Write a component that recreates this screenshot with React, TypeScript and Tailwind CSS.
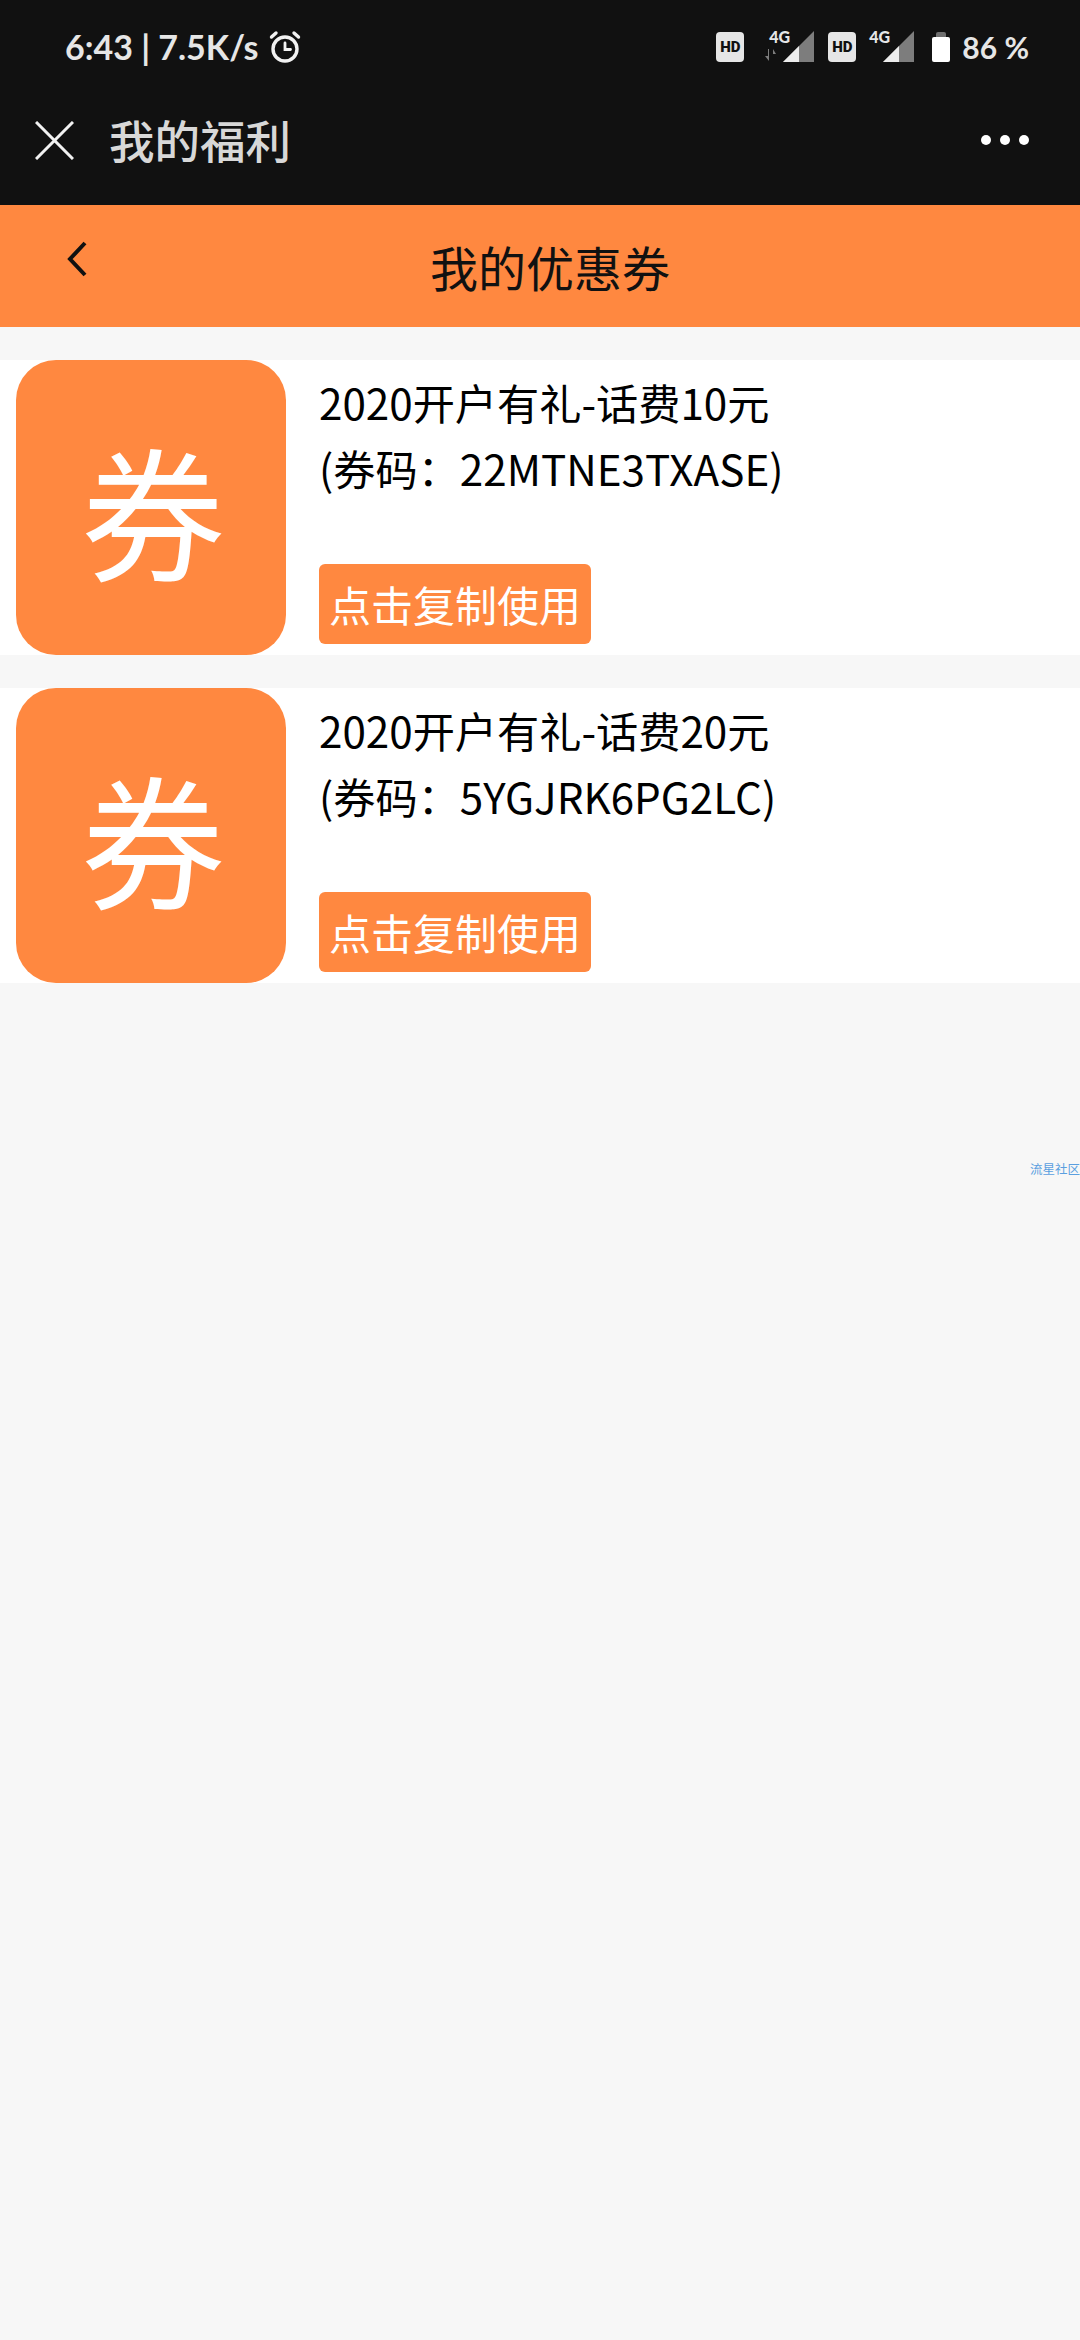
const cjk = "font-['Noto_Sans_CJK_SC','Noto_Sans',sans-serif]";

const coupons = [
  { title: "2020开户有礼-话费10元", code: "(券码：22MTNE3TXASE)" },
  { title: "2020开户有礼-话费20元", code: "(券码：5YGJRK6PG2LC)" },
];

const AlarmIcon = () => (
  <svg width="32" height="34" viewBox="0 0 32 34" fill="none" stroke="#f2f2f2" strokeWidth="3.4" strokeLinecap="round">
    <circle cx="16" cy="19" r="12" />
    <path d="M16 13v6.5h5.5" strokeWidth="2.8" />
    <path d="M2.5 7l4.5-4M29.5 7l-4.5-4" />
  </svg>
);

const Signal = () => (
  <svg width="31" height="31" viewBox="0 0 31 31">
    <path d="M31 0v31H0z" fill="#7d7d7d" />
    <path d="M16 15v16H0z" fill="#ececec" />
  </svg>
);

const HdBadge = () => (
  <div className="flex h-[30px] w-[28px] items-center justify-center rounded-[4px] bg-[#e6e6e6] font-['Roboto',sans-serif] text-[15px] font-black leading-none text-[#111111]">
    HD
  </div>
);

const StatusBar = () => (
  <div className="flex h-[92px] items-start pt-[28px] font-['Lato','Noto_Sans',sans-serif] text-[#e6e6e6]">
    <div className="ml-[65px] flex items-center">
      <span className="text-[34px] font-bold leading-[38px]">6:43 | 7.5K/s</span>
      <div className="ml-[10px]">
        <AlarmIcon />
      </div>
    </div>
    <div className="ml-auto mr-[51px] flex items-center pt-[4px]">
      <HdBadge />
      <div className="relative ml-[20px] h-[30px] w-[50px]">
        <span className="absolute left-[5px] top-[-4px] text-[16px] font-black leading-[18px]">4G</span>
        <svg className="absolute bottom-[0px] left-0" width="14" height="14" viewBox="0 0 14 14" fill="#7d7d7d">
          <path d="M4 1v7H1l4 5V1zM9 13V6h3L9 1z" />
        </svg>
        <div className="absolute bottom-0 right-0">
          <Signal />
        </div>
      </div>
      <div className="ml-[14px]">
        <HdBadge />
      </div>
      <div className="relative ml-[13px] h-[30px] w-[45px]">
        <span className="absolute left-0 top-[-4px] text-[16px] font-black leading-[18px]">4G</span>
        <div className="absolute bottom-0 right-0">
          <Signal />
        </div>
      </div>
      <div className="ml-[18px] flex flex-col items-center">
        <div className="h-[5px] w-[10px] rounded-t-[2px] bg-[#6f6f6f]" />
        <div className="h-[25px] w-[18px] rounded-[2px] bg-white" />
      </div>
      <span className="ml-[12px] text-[30px] font-bold leading-[30px]">86 %</span>
    </div>
  </div>
);

const NavBar = () => (
  <div className="flex h-[113px] items-start bg-[#111111]">
    <svg className="ml-[35px] mt-[29px]" width="39" height="39" viewBox="0 0 39 39" stroke="#f2f2f2" strokeWidth="3">
      <path d="M1 1l37 37M38 1L1 38" />
    </svg>
    <span className={`${cjk} ml-[35px] mt-[17px] text-[45.5px] font-medium leading-[60px] text-[#d8d8d8]`}>我的福利</span>
    <div className="ml-auto mr-[51px] mt-[43px] flex gap-[9px]">
      <div className="h-[10px] w-[10px] rounded-full bg-white" />
      <div className="h-[10px] w-[10px] rounded-full bg-white" />
      <div className="h-[10px] w-[10px] rounded-full bg-white" />
    </div>
  </div>
);

const CouponRow = ({ title, code }: { title: string; code: string }) => (
  <div className="flex h-[295px] bg-white">
    <div className="ml-[16px] flex h-full w-[270px] items-center justify-center rounded-[40px] bg-[#ff8840] pl-[4px] text-[144px] leading-none text-white">
      券
    </div>
    <div className="ml-[33px] flex flex-col items-start">
      <div className="mt-[9px] text-[42.2px] leading-[66px] text-black">{title}</div>
      <div className="text-[42.2px] leading-[66px] text-black">{code}</div>
      <button className="mt-[63px] h-[80px] w-[272px] rounded-[6px] bg-[#ff8840] text-center text-[42px] leading-[80px] text-white">
        点击复制使用
      </button>
    </div>
  </div>
);

export default function App() {
  return (
    <div className={`${cjk} flex h-[2340px] w-[1080px] flex-col overflow-hidden bg-[#f7f7f7]`}>
      <div className="bg-[#111111]">
        <StatusBar />
        <NavBar />
      </div>

      <div className="relative flex h-[122px] items-center justify-center bg-[#ff8840] pl-[20px]">
        <svg className="absolute left-[66px] top-[36px]" width="22" height="36" viewBox="0 0 22 36" fill="none" stroke="#111111" strokeWidth="4">
          <path d="M19 2L4 18l15 16" />
        </svg>
        <span className="text-[48px] leading-[64px] text-[#111111]">我的优惠券</span>
      </div>

      <div className="mt-[33px] flex flex-col gap-[33px]">
        {coupons.map((c) => (
          <CouponRow key={c.code} title={c.title} code={c.code} />
        ))}
      </div>

      <div className="mt-[177px] flex justify-end">
        <span className="text-[12.5px] leading-[18px] text-[#5a9fe0]">流星社区</span>
      </div>
    </div>
  );
}
